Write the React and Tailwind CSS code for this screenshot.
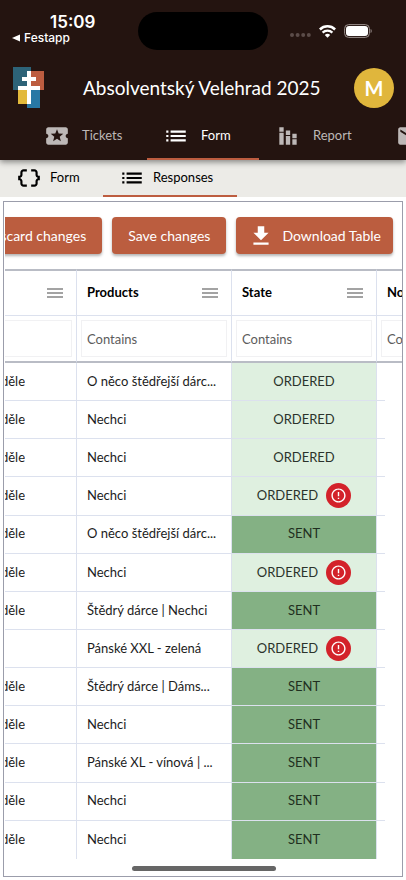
import React from "react";
import {
  MdLocalActivity,
  MdList,
  MdStackedBarChart,
  MdEmail,
  MdDataObject,
  MdDownload,
  MdErrorOutline,
} from "react-icons/md";

const rows = [
  { day: "neděle", products: "O něco štědřejší dárc...", state: "ORDERED" },
  { day: "neděle", products: "Nechci", state: "ORDERED" },
  { day: "neděle", products: "Nechci", state: "ORDERED" },
  { day: "neděle", products: "Nechci", state: "ORDERED", alert: true },
  { day: "neděle", products: "O něco štědřejší dárc...", state: "SENT" },
  { day: "neděle", products: "Nechci", state: "ORDERED", alert: true },
  { day: "neděle", products: "Štědrý dárce | Nechci", state: "SENT" },
  { day: "", products: "Pánské XXL - zelená", state: "ORDERED", alert: true },
  { day: "neděle", products: "Štědrý dárce | Dáms...", state: "SENT" },
  { day: "neděle", products: "Nechci", state: "SENT" },
  { day: "neděle", products: "Pánské XL - vínová | ...", state: "SENT" },
  { day: "neděle", products: "Nechci", state: "SENT" },
  { day: "neděle", products: "Nechci", state: "SENT" },
];

function StatusBar() {
  return (
    <div className="flex h-[62px] items-start justify-between pt-3 font-['Inter',sans-serif]">
      <div className="w-[138px] pl-3">
        <div className="pl-[38px] text-[17px] leading-5 font-semibold">15:09</div>
        <div className="flex items-center gap-1 text-xs leading-3 font-medium">
          <svg viewBox="0 0 8 8" className="size-2 fill-white" aria-hidden="true">
            <path d="M8 .5v7L0 4z" />
          </svg>
          Festapp
        </div>
      </div>
      <div className="h-[38px] w-[130px] rounded-full bg-black" />
      <div className="flex w-[138px] items-center gap-2 pt-3 pl-[22px]">
        <svg viewBox="0 0 21 14" className="h-[14px] w-[21px] fill-[#5b4c49]" aria-hidden="true">
          <circle cx="2" cy="11" r="2" />
          <circle cx="7.600" cy="11" r="2" />
          <circle cx="13.200" cy="11" r="2" />
          <circle cx="18.800" cy="11" r="2" />
        </svg>
        <svg viewBox="0 0 17 13" className="h-[13px] w-[17px]" fill="none" stroke="#fff" aria-hidden="true">
          <path d="M.9 4.500a10.800 10.800 0 0 1 15.200 0" strokeWidth="2.500" />
          <path d="M3.600 7.600a7 7 0 0 1 9.800 0" strokeWidth="2.300" />
          <path d="M8.500 12.800 5.800 10a3.900 3.900 0 0 1 5.400 0z" fill="#fff" stroke="none" />
        </svg>
        <svg viewBox="0 0 28 14" className="h-[14px] w-[28px]" aria-hidden="true">
          <rect x=".6" y=".6" width="24.800" height="12.800" rx="4" fill="none" stroke="#9a8f8c" />
          <rect x="2" y="2" width="22" height="10" rx="3" fill="#fff" />
          <path d="M26.600 5v4c1.500-.8 1.500-3.200 0-4z" fill="#9a8f8c" />
        </svg>
      </div>
    </div>
  );
}

function Logo() {
  return (
    <svg viewBox="0 0 32 42" className="h-[42px] w-8 shrink-0" role="img" aria-label="Velehrad">
      <path fill="#2d6378" d="M0 0h18v23H0z" />
      <path fill="#bd5d40" d="M14 4h17v19H14z" />
      <path fill="#8f4d43" d="M14 4h4v19h-4z" />
      <path fill="#e2b93b" d="M5 23h13v14H5z" />
      <path fill="#2878a5" d="M14 23h13v18H14z" />
      <path fill="#fff" d="M14 4h4v6h5v4h-5v5h9v4h-9v14h-4V23H5v-4h9v-5H9v-4h5z" />
    </svg>
  );
}

function Tab({ icon: Icon, label, width, active }) {
  return (
    <button
      type="button"
      role="tab"
      aria-selected={active}
      aria-label={label || "Messages"}
      className={`flex shrink-0 items-center gap-3 border-b-2 pl-4 text-[13px] ${width} ${
        active ? "border-[#bd5d40] text-white" : "border-transparent text-[#bdb8b7]"
      }`}
    >
      <Icon className="size-[26px] shrink-0" />
      {label}
    </button>
  );
}

function SubTab({ icon: Icon, label, width, active }) {
  return (
    <button
      type="button"
      role="tab"
      aria-selected={active}
      className={`flex items-center gap-2 border-b-2 pl-4 text-[13px] text-black ${width} ${
        active ? "border-[#bd5d40]" : "border-transparent"
      }`}
    >
      <Icon className="size-[26px] shrink-0" />
      {label}
    </button>
  );
}

function ActionButton({ children, padding = "px-4" }) {
  return (
    <button
      type="button"
      className={`flex h-[37px] shrink-0 items-center gap-2 rounded bg-[#bb5d3f] text-sm text-white shadow-[0_2px_3px_rgba(0,0,0,0.3)] ${padding}`}
    >
      {children}
    </button>
  );
}

function MenuLines() {
  return (
    <svg viewBox="0 0 16 10" className="h-[10px] w-4" stroke="#858585" strokeWidth="1.300" aria-hidden="true">
      <path d="M0 1h16M0 5h16M0 9h16" />
    </svg>
  );
}

function HeaderCell({ label, colSpan, menu = true }) {
  return (
    <th
      scope="col"
      colSpan={colSpan}
      className="overflow-hidden border-t-2 border-r border-b border-t-[#b9bcc5] border-r-[#dce1ee] border-b-[#dce1ee] p-0 last:border-r-0"
    >
      <div className="flex items-center justify-between pr-[13px] pl-[10px] text-left font-bold text-black">
        <span>{label}</span>
        {menu && (
          <button type="button" aria-label={`${label || "Column"} menu`}>
            <MenuLines />
          </button>
        )}
      </div>
    </th>
  );
}

function FilterCell({ label, colSpan, placeholder, box = "mx-1 w-[calc(100%-8px)]" }) {
  return (
    <td
      colSpan={colSpan}
      className="overflow-hidden border-r border-b-2 border-r-[#dce1ee] border-b-[#b9bcc5] p-0 last:border-r-0"
    >
      <input
        type="text"
        aria-label={label}
        placeholder={placeholder}
        className={`block h-[37px] border border-[#f1f1f3] px-[5px] placeholder:text-[#5c5c5c] ${box}`}
      />
    </td>
  );
}

function Row({ day, products, state, alert }) {
  const line = "border-b border-[#dce1ee] p-0 group-last:border-b-0";
  return (
    <tr className="group h-[38px]">
      <td className={`border-r ${line}`}>
        <div className="flex w-5 justify-end overflow-hidden">{day}</div>
      </td>
      <td className={`border-r ${line}`}>
        <div className="overflow-hidden pl-[10px] whitespace-nowrap">{products}</div>
      </td>
      <td
        className={`border-r ${line} ${
          state === "SENT" ? "bg-[#84b184] text-[#1f2f20]" : "bg-[#dff0e0] text-[#2b332b]"
        }`}
      >
        <div className="flex items-center justify-center gap-2">
          {state}
          {alert && (
            <span className="flex size-[25px] items-center justify-center rounded-full bg-[#d3222a] text-white">
              <MdErrorOutline className="size-[17px]" />
            </span>
          )}
        </div>
      </td>
      <td className={line} />
      <td className="p-0" />
    </tr>
  );
}

export default function App() {
  return (
    <div className="flex min-h-screen flex-col overflow-hidden bg-white font-['Lato',sans-serif]">
      <header className="relative z-10 bg-[#241410] text-white shadow-[0_2px_6px_rgba(0,0,0,0.45)]">
        <StatusBar />
        <div className="flex h-[52px] items-center pr-3 pl-[13px]">
          <Logo />
          <h1 className="flex-1 pl-[38px] text-[19px] whitespace-nowrap">Absolventský Velehrad 2025</h1>
          <button type="button" className="size-10 shrink-0 rounded-full bg-[#e0b63c] text-xl font-bold">
            M
          </button>
        </div>
        <nav role="tablist" className="flex h-[46px] overflow-hidden pl-7">
          <Tab icon={MdLocalActivity} label="Tickets" width="w-[119px]" />
          <Tab icon={MdList} label="Form" width="w-28" active />
          <Tab icon={MdStackedBarChart} label="Report" width="w-[121px]" />
          <Tab icon={MdEmail} label="" width="w-28" />
        </nav>
      </header>

      <nav role="tablist" className="flex h-[37px] bg-[#ecebe7]">
        <SubTab icon={MdDataObject} label="Form" width="w-[103px]" />
        <SubTab icon={MdList} label="Responses" width="w-[134px]" active />
      </nav>

      <main className="mx-[3px] mt-1 mb-[3px] flex flex-1 flex-col overflow-hidden border border-[#9b9dab] pl-px">
        <div className="flex justify-end gap-[10px] overflow-hidden pt-[15px] pr-[9px] pb-[15px]">
          <ActionButton>Discard changes</ActionButton>
          <ActionButton>Save changes</ActionButton>
          <ActionButton padding="px-3">
            <MdDownload className="size-[26px] shrink-0" />
            Download Table
          </ActionButton>
        </div>

        <table className="h-[590px] w-full table-fixed border-separate border-spacing-0 text-[13px] text-[#1c1c1c]">
          <colgroup>
            <col className="w-[72px]" />
            <col className="w-[155px]" />
            <col className="w-[145px]" />
            <col className="w-2" />
            <col />
          </colgroup>
          <thead>
            <tr className="h-[47px]">
              <HeaderCell label="" />
              <HeaderCell label="Products" />
              <HeaderCell label="State" />
              <HeaderCell label="Note" colSpan={2} menu={false} />
            </tr>
            <tr className="h-[47px]">
              <FilterCell label="Filter day" placeholder="" box="w-[calc(100%-4px)] border-l-0" />
              <FilterCell label="Filter products" placeholder="Contains" />
              <FilterCell label="Filter state" placeholder="Contains" />
              <FilterCell label="Filter note" placeholder="Contains" colSpan={2} box="ml-1 w-20" />
            </tr>
          </thead>
          <tbody>
            {rows.map((row, i) => (
              <Row key={i} {...row} />
            ))}
          </tbody>
        </table>

        <div className="mx-auto mt-[7px] h-[5px] w-36 rounded-full bg-[#666]" />
      </main>
    </div>
  );
}
